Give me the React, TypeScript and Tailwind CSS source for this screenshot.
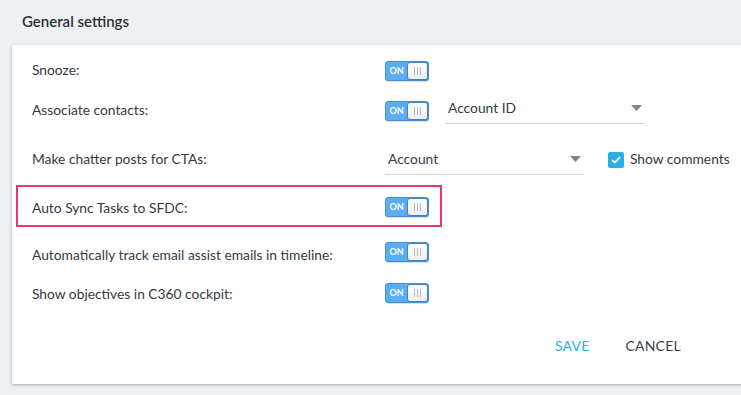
import React from 'react'

function Toggle() {
  return (
    <div className="flex h-[20px] w-[44px] items-center rounded-[3px] border border-[#4a8fd0] bg-[#5aacf3] shadow-[0_1px_1px_rgba(0,0,0,0.15)]">
      <span className="w-[21px] text-center text-[9px] font-bold leading-none text-white">ON</span>
      <div className="flex h-[18px] flex-1 items-center justify-center gap-[2px] rounded-[3px] border border-[#3f82c4] bg-gradient-to-b from-white to-[#eceff2]">
        <span className="h-[8px] w-px bg-[#b5bcc4]" />
        <span className="h-[8px] w-px bg-[#b5bcc4]" />
        <span className="h-[8px] w-px bg-[#b5bcc4]" />
      </div>
    </div>
  )
}

function Select({ value, width }: { value: string; width: string }) {
  return (
    <div className={`flex h-[30px] items-center justify-between border-b border-[#cfd4da] pl-[3px] pr-[3px] ${width}`}>
      <span className="text-[13.8px] text-[#333a43]">{value}</span>
      <svg width="11" height="6" viewBox="0 0 11 6">
        <path d="M0 0 L11 0 L5.5 6 Z" fill="#7d858f" />
      </svg>
    </div>
  )
}

function Row({ label, children, className = '' }: { label: string; children?: React.ReactNode; className?: string }) {
  return (
    <div className={`flex items-center pl-[20px] ${className}`}>
      <span className="w-[353px] text-[13.8px] text-[#333a43]">{label}</span>
      <div className="flex items-center">{children}</div>
    </div>
  )
}

export default function App() {
  return (
    <div className="h-[395px] w-[741px] overflow-hidden bg-[#eef1f4] font-['Lato','Open_Sans',sans-serif]">
      <div className="px-[22px] pt-[10px] text-[15px] font-semibold text-[#2a3039]">General settings</div>
      <div className="ml-[12px] mt-[12px] h-[339px] w-[760px] bg-white shadow-[0_1px_3px_rgba(0,0,0,0.3)]">
        <div className="pt-[14px]">
          <Row label="Snooze:" className="h-[24px]">
            <Toggle />
          </Row>
          <Row label="Associate contacts:" className="mt-[16px] h-[24px]">
            <Toggle />
            <div className="-mt-[4px] ml-[16px]">
              <Select value="Account ID" width="w-[200px]" />
            </div>
          </Row>
          <Row label="Make chatter posts for CTAs:" className="mt-[24px] h-[26px]">
            <Select value="Account" width="w-[199px]" />
            <div className="ml-[24px] flex items-center">
              <div className="flex h-[16px] w-[16px] items-center justify-center rounded-[2px] bg-[#29aee6]">
                <svg width="10" height="8" viewBox="0 0 10 8">
                  <path d="M1 4 L3.8 6.6 L9 1.2" stroke="white" strokeWidth="1.8" fill="none" />
                </svg>
              </div>
              <span className="ml-[6px] text-[13.8px] text-[#333a43]">Show comments</span>
            </div>
          </Row>
          <div className="ml-[4px] mt-[12px] flex h-[42px] w-[426px] items-center border-2 border-[#f5336e] pl-[14px] pt-[6px]">
            <span className="w-[353px] text-[13.8px] text-[#333a43]">Auto Sync Tasks to SFDC:</span>
            <div className="-mt-[4px]">
              <Toggle />
            </div>
          </div>
          <Row label="Automatically track email assist emails in timeline:" className="mt-[17px] h-[24px]">
            <div className="-mt-[8px]">
              <Toggle />
            </div>
          </Row>
          <Row label="Show objectives in C360 cockpit:" className="mt-[15px] h-[24px]">
            <div className="-mt-[4px]">
              <Toggle />
            </div>
          </Row>
          <div className="mt-[29px] flex h-[20px] items-center pl-[543px] text-[14px] tracking-[0.2px]">
            <span className="text-[#27b3ee]">SAVE</span>
            <span className="ml-[36px] text-[#38414f]">CANCEL</span>
          </div>
        </div>
      </div>
    </div>
  )
}
